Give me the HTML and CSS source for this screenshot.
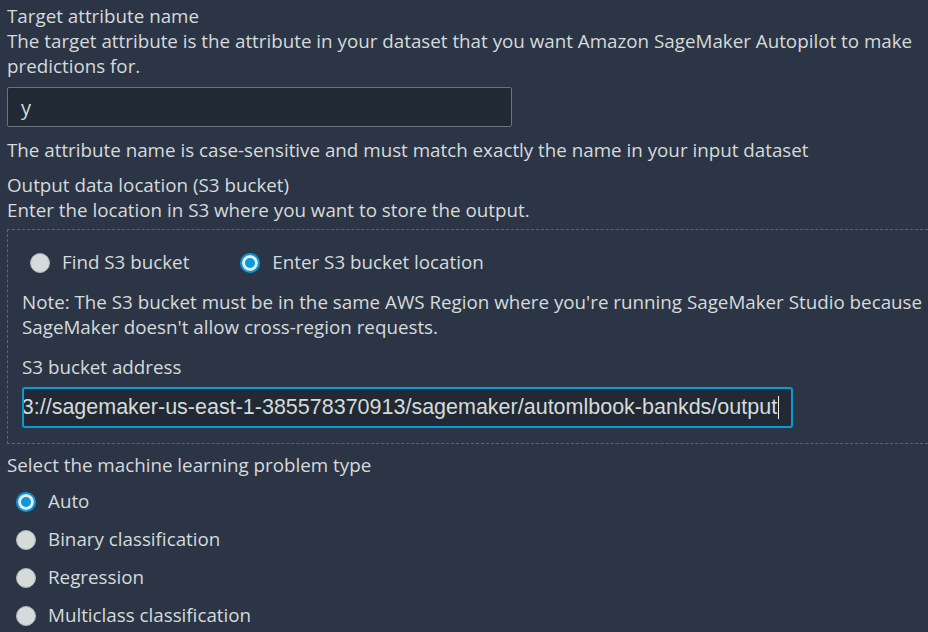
FILE: index.html
```html
<!DOCTYPE html>
<html lang="en">
<head>
<meta charset="utf-8">
<title>Autopilot settings</title>
<link rel="stylesheet" href="styles.css">
</head>
<body>
<div class="page">
  <div class="field-label">Target attribute name</div>
  <div class="desc">The target attribute is the attribute in your dataset that you want Amazon SageMaker Autopilot to make predictions for.</div>
  <div class="text-input"><span class="value">y</span></div>
  <div class="hint">The attribute name is case-sensitive and must match exactly the name in your input dataset</div>
  <div class="field-label gap-top">Output data location (S3 bucket)</div>
  <div class="desc">Enter the location in S3 where you want to store the output.</div>

  <div class="panel">
    <div class="radio-row">
      <label class="radio-inline"><span class="radio"></span><span>Find S3 bucket</span></label>
      <label class="radio-inline"><span class="radio checked"></span><span>Enter S3 bucket location</span></label>
    </div>
    <div class="note">Note: The S3 bucket must be in the same AWS Region where you're running SageMaker Studio because SageMaker doesn't allow cross-region requests.</div>
    <div class="sub-label">S3 bucket address</div>
    <div class="url-input"><span class="url-text">s3://sagemaker-us-east-1-385578370913/sagemaker/automlbook-bankds/output</span><span class="caret"></span></div>
  </div>

  <div class="field-label select-label">Select the machine learning problem type</div>
  <div class="radio-list">
    <label class="radio-item"><span class="radio checked"></span><span>Auto</span></label>
    <label class="radio-item"><span class="radio"></span><span>Binary classification</span></label>
    <label class="radio-item"><span class="radio"></span><span>Regression</span></label>
    <label class="radio-item"><span class="radio"></span><span>Multiclass classification</span></label>
  </div>
</div>
</body>
</html>
```
FILE: styles.css
```css
html, body {
  margin: 0;
  padding: 0;
  background: #2c3545;
  overflow: hidden;
}
body {
  width: 928px;
  height: 632px;
  font-family: "Open Sans", "Noto Sans", sans-serif;
  font-size: 18.8px;
  line-height: 25px;
  color: #d5dbdb;
}
.page {
  padding: 4px 0 0 7px;
}
.desc {
  width: 915px;
}
.text-input {
  margin-top: 8px;
  height: 38px;
  border: 1px solid #6b737e;
  border-radius: 2px;
  background: #212934;
  display: flex;
  align-items: center;
  padding-left: 13px;
  box-sizing: content-box;
  width: 490px;
}
.text-input .value {
  font-size: 20px;
}
.hint {
  margin-top: 11px;
  white-space: nowrap;
}
.gap-top {
  margin-top: 10px;
}
.panel {
  margin-top: 6px;
  width: 940px;
  border: 1px dashed #5c6573;
  padding: 20px 0 15px 14px;
}
.radio-row {
  display: flex;
  align-items: center;
  padding-left: 8px;
  gap: 51px;
}
.radio-inline, .radio-item {
  display: flex;
  align-items: center;
  gap: 12px;
  height: 25px;
}
.radio {
  width: 20px;
  height: 20px;
  border-radius: 50%;
  background: #d5dbdb;
  box-sizing: border-box;
  border: 1px solid #aab7b8;
  flex: none;
}
.radio.checked {
  background: #0a9ad8;
  border: 2px solid #0a9ad8;
  box-shadow: inset 0 0 0 3px #e9ebed;
}
.note {
  margin-top: 15px;
  width: 905px;
}
.sub-label {
  margin-top: 15px;
}
.url-input {
  margin-top: 7px;
  width: 767px;
  height: 37px;
  border: 2px solid #0a9ad8;
  border-radius: 3px;
  background: #212934;
  display: flex;
  align-items: center;
  overflow: hidden;
  white-space: nowrap;
  font-family: "Liberation Sans", Arial, sans-serif;
  font-size: 21.5px;
}
.url-text {
  margin-left: -13px;
  flex: none;
}
.caret {
  width: 1px;
  height: 23px;
  background: #f2f3f3;
  margin-left: 1px;
  flex: none;
}
.select-label {
  margin-top: 9px;
}
.radio-list {
  display: flex;
  flex-direction: column;
  gap: 13px;
  margin-top: 11px;
  padding-left: 9px;
}
```
